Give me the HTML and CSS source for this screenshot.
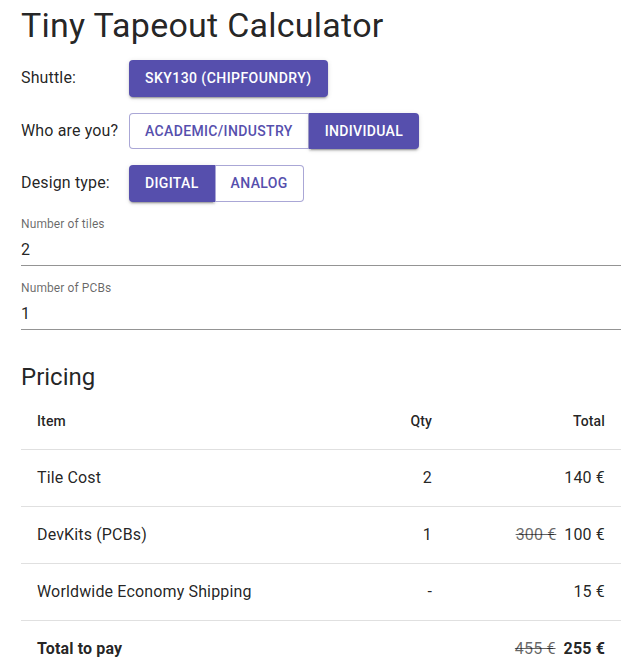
FILE: index.html
```html
<!DOCTYPE html>
<html lang="en">
<head>
<meta charset="utf-8">
<title>Tiny Tapeout Calculator</title>
<link rel="stylesheet" href="styles.css">
</head>
<body>
<main class="page">
  <h1 class="title">Tiny Tapeout Calculator</h1>

  <div class="row">
    <span class="row-label">Shuttle:</span>
    <div class="group">
      <button class="btn contained wide">SKY130 (chipfoundry)</button>
    </div>
  </div>

  <div class="row">
    <span class="row-label">Who are you?</span>
    <div class="group">
      <button class="btn outlined first">Academic/Industry</button>
      <button class="btn contained last">Individual</button>
    </div>
  </div>

  <div class="row">
    <span class="row-label">Design type:</span>
    <div class="group">
      <button class="btn contained first">Digital</button>
      <button class="btn outlined last">Analog</button>
    </div>
  </div>

  <div class="field">
    <label class="field-label">Number of tiles</label>
    <div class="field-input">2</div>
  </div>

  <div class="field">
    <label class="field-label">Number of PCBs</label>
    <div class="field-input">1</div>
  </div>

  <h2 class="section">Pricing</h2>

  <table class="price">
    <thead>
      <tr>
        <th class="c-item">Item</th>
        <th class="c-qty">Qty</th>
        <th class="c-total">Total</th>
      </tr>
    </thead>
    <tbody>
      <tr>
        <td class="c-item">Tile Cost</td>
        <td class="c-qty">2</td>
        <td class="c-total">140 €</td>
      </tr>
      <tr>
        <td class="c-item">DevKits (PCBs)</td>
        <td class="c-qty">1</td>
        <td class="c-total"><s class="old">300 €</s>100 €</td>
      </tr>
      <tr>
        <td class="c-item">Worldwide Economy Shipping</td>
        <td class="c-qty">-</td>
        <td class="c-total">15 €</td>
      </tr>
      <tr class="sum">
        <td class="c-item"><strong>Total to pay</strong></td>
        <td class="c-qty"></td>
        <td class="c-total"><s class="old">455 €</s><strong>255 €</strong></td>
      </tr>
    </tbody>
  </table>
</main>
</body>
</html>
```

FILE: styles.css
```css
* { box-sizing: border-box; }

html, body {
  margin: 0;
  padding: 0;
  background: #fff;
}

body {
  font-family: Roboto, "Liberation Sans", sans-serif;
  color: rgba(0, 0, 0, 0.87);
}

.page {
  width: 600px;
  margin-left: 21px;
  padding-top: 4px;
}

.title {
  margin: 0 0 14px;
  font-size: 34px;
  font-weight: 400;
  line-height: 42px;
  letter-spacing: 0.25px;
}

.row {
  display: flex;
  align-items: center;
  margin-bottom: 16px;
}

.row-label {
  width: 108px;
  font-size: 16px;
  line-height: 24px;
  letter-spacing: 0.15px;
}

.group {
  display: flex;
  border-radius: 4px;
}

.btn {
  font-family: Roboto, "Liberation Sans", sans-serif;
  font-size: 14px;
  font-weight: 500;
  line-height: 1.75;
  letter-spacing: 0.35px;
  text-transform: uppercase;
  border-radius: 4px;
  cursor: pointer;
  margin: 0;
}

.wide {
  letter-spacing: 0.45px;
}

.contained {
  background: #564fad;
  color: #fff;
  border: none;
  padding: 6px 16px;
  box-shadow: 0 3px 1px -2px rgba(0,0,0,0.2), 0 2px 2px 0 rgba(0,0,0,0.14), 0 1px 5px 0 rgba(0,0,0,0.12);
}

.outlined {
  background: #fff;
  color: #564fad;
  border: 1px solid rgba(86, 79, 173, 0.5);
  padding: 5px 15px;
}

.first {
  border-top-right-radius: 0;
  border-bottom-right-radius: 0;
}

.last {
  border-top-left-radius: 0;
  border-bottom-left-radius: 0;
}

.field {
  position: relative;
  padding-top: 16px;
  margin-bottom: 16px;
}

.field-label {
  position: absolute;
  left: 0;
  top: -1.5px;
  font-size: 12px;
  line-height: 17.25px;
  color: rgba(0, 0, 0, 0.6);
  letter-spacing: 0.1px;
}

.field-input {
  height: 32px;
  padding: 4px 0 5px;
  font-size: 16px;
  line-height: 23px;
  letter-spacing: 0.15px;
  border-bottom: 1px solid rgba(0, 0, 0, 0.42);
}

.section {
  margin: 31px 0 0;
  font-size: 24px;
  font-weight: 400;
  line-height: 32px;
}

.price {
  width: 600px;
  border-collapse: collapse;
}

.price th,
.price td {
  padding: 16px;
  border-bottom: 1px solid #e0e0e0;
  text-align: left;
}

.price th {
  font-size: 14px;
  font-weight: 500;
  line-height: 24px;
  letter-spacing: 0.15px;
}

.price td {
  font-size: 16px;
  font-weight: 400;
  line-height: 24px;
  letter-spacing: 0.15px;
}

.price .c-qty {
  width: 100px;
  text-align: right;
}

.price .c-total {
  width: 173px;
  text-align: right;
}

.old {
  color: rgba(0, 0, 0, 0.6);
  margin-right: 8px;
}

.sum strong {
  font-weight: 700;
}
```
